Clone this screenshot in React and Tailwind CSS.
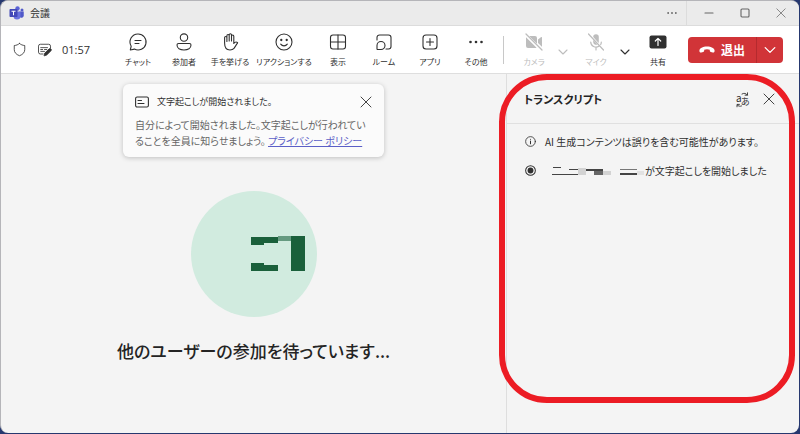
import clsx from 'clsx'

function Icon({ children, className = 'size-5', viewBox = '0 0 20 20' }) {
  return (
    <svg
      className={clsx('shrink-0 overflow-visible', className)}
      viewBox={viewBox}
      fill="none"
      stroke="currentColor"
      strokeWidth={1.1}
      strokeLinecap="round"
      strokeLinejoin="round"
      aria-hidden="true"
    >
      {children}
    </svg>
  )
}

function TeamsLogo() {
  return (
    <svg className="h-[14px] w-[15px]" viewBox="0 0 30 28" aria-hidden="true">
      <circle cx="26" cy="8" r="3" fill="#5059c9" />
      <circle cx="17" cy="5" r="4.4" fill="#5b63d6" />
      <path d="M21 11h8.5v8a4.5 4.5 0 0 1-8.5 2z" fill="#5059c9" />
      <path d="M9 11h14v9a7 7 0 0 1-14 0z" fill="#6a72de" />
      <rect x="1" y="6" width="16" height="16" rx="1.5" fill="#4349b8" />
      <path d="M5 10.5h8M9 10.5v8" stroke="#fff" strokeWidth="2" />
    </svg>
  )
}

const ChatIcon = () => (
  <Icon>
    <path d="M10 2a8 8 0 1 1-3.6 15.1L2.3 18l.9-3.8A8 8 0 0 1 10 2z" />
    <path d="M7 8.5h6M7 11.5h4" />
  </Icon>
)

const PeopleIcon = () => (
  <Icon>
    <circle cx="10" cy="5.6" r="3.7" />
    <path d="M4.6 11.5h10.8c.9 0 1.6.7 1.6 1.6 0 3-3 4.9-7 4.9s-7-1.9-7-4.9c0-.9.7-1.6 1.6-1.6z" />
  </Icon>
)

const HandIcon = () => (
  <Icon>
    <path d="M4.6 11V5.6a1.15 1.15 0 0 1 2.3 0v3.9M6.9 9.5V3.7a1.15 1.15 0 0 1 2.3 0V9M9.2 9V2.9a1.15 1.15 0 0 1 2.3 0V9M11.5 9V4.2a1.15 1.15 0 0 1 2.3 0v7.3c1-1.4 2.3-1.8 3.6-1.1.3.2.3.5.1.8-1.6 1.8-2.2 3.6-3.5 5.2-.9 1.1-2.2 1.6-4 1.6-3.6 0-5.4-2.4-5.4-7" />
  </Icon>
)

const SmileIcon = () => (
  <Icon>
    <circle cx="10" cy="10" r="8" />
    <path d="M6.7 12.2c1.7 2.2 4.9 2.2 6.6 0" />
    <circle cx="7.3" cy="8" r=".6" fill="currentColor" />
    <circle cx="12.7" cy="8" r=".6" fill="currentColor" />
  </Icon>
)

const GridIcon = () => (
  <Icon>
    <rect x="2.5" y="3" width="15" height="14" rx="2.5" />
    <path d="M10 3v14M2.5 10h15" />
  </Icon>
)

const RoomIcon = () => (
  <Icon>
    <path d="M3 8V5.5A2.5 2.5 0 0 1 5.5 3h9A2.5 2.5 0 0 1 17 5.5v9a2.5 2.5 0 0 1-2.5 2.5H12" />
    <path d="M3 17v-3.5a4 4 0 1 1 4 4H3.5A.5.5 0 0 1 3 17z" />
  </Icon>
)

const AppsIcon = () => (
  <Icon>
    <rect x="3" y="3" width="14" height="14" rx="3" />
    <path d="M10 6.5v7M6.5 10h7" />
  </Icon>
)

const MoreIcon = ({ className = 'size-5' }) => (
  <Icon className={className}>
    <g fill="currentColor" stroke="none">
      <circle cx="4.5" cy="10" r="1.3" />
      <circle cx="10" cy="10" r="1.3" />
      <circle cx="15.5" cy="10" r="1.3" />
    </g>
  </Icon>
)

const CameraOffIcon = () => (
  <Icon>
    <g fill="currentColor" stroke="none">
      <path d="M5.2 4H11a2 2 0 0 1 2 2v5.8zM2 5.2 12.6 15.8c-.5.2-1 .2-1.6.2H4a2 2 0 0 1-2-2z" />
      <path d="m14 7.500 3.200-2.400c.4-.2.8 0 .8.5v8.800c0 .2 0 .3-.1.4L14 11z" />
    </g>
    <path d="m2 2 16 16" strokeWidth={1.3} />
  </Icon>
)

const MicOffIcon = () => (
  <Icon>
    <path
      d="M7.2 5a2.8 2.8 0 0 1 5.6 0v5c0 .4-.1.8-.2 1.100zM7.200 8l4.200 4.400A2.800 2.800 0 0 1 7.200 10z"
      fill="currentColor"
      stroke="none"
    />
    <path
      d="M4.7 10a5.3 5.3 0 0 0 8.2 4.3M15.3 10c0 .9-.2 1.7-.6 2.5M10 15.3V18M2.5 2l15 16"
      strokeWidth={1.2}
    />
  </Icon>
)

const ShareIcon = () => (
  <Icon>
    <rect x="1.5" y="3.5" width="17" height="13" rx="2" fill="currentColor" stroke="none" />
    <path d="M10 13.5v-7M7.3 9 10 6.3 12.7 9" stroke="#fff" strokeWidth={1.2} />
  </Icon>
)

const ChevronIcon = ({ className = 'size-[10px]' }) => (
  <Icon className={className} viewBox="0 0 10 10">
    <path d="m1 3 4 4 4-4" />
  </Icon>
)

const CloseIcon = ({ className = 'size-3' }) => (
  <Icon className={className} viewBox="0 0 12 12">
    <path d="m1 1 10 10M11 1 1 11" strokeWidth={0.9} />
  </Icon>
)

const tools = [
  { label: 'チャット', icon: ChatIcon },
  { label: '参加者', icon: PeopleIcon },
  { label: '手を挙げる', icon: HandIcon },
  { label: 'リアクションする', icon: SmileIcon, wide: true },
  { label: '表示', icon: GridIcon },
  { label: 'ルーム', icon: RoomIcon },
  { label: 'アプリ', icon: AppsIcon },
  { label: 'その他', icon: MoreIcon },
]

function ToolButton({ label, icon: Glyph, className, disabled }) {
  return (
    <button
      type="button"
      disabled={disabled}
      className={clsx(
        'flex flex-col items-center gap-1 whitespace-nowrap text-[8px] leading-3',
        disabled ? 'text-[#bdbdbd]' : 'text-[#303030]',
        className
      )}
    >
      <Glyph />
      <span>{label}</span>
    </button>
  )
}

function TitleBar() {
  return (
    <header className="flex h-[25px] items-center justify-between border-b border-[#dcdcdc] bg-[#ebebeb] text-[#666]">
      <div className="flex items-center gap-[6px] pl-2">
        <TeamsLogo />
        <h1 className="text-[10px] leading-4 text-[#333]">会議</h1>
      </div>
      <div className="flex h-full items-center pr-1">
        <button type="button" aria-label="設定など" className="flex w-7 justify-center">
          <MoreIcon className="size-[14px]" />
        </button>
        <div className="h-full w-px bg-[#dcdcdc]" />
        <button type="button" aria-label="最小化" className="flex w-9 justify-center pl-2">
          <Icon className="size-[10px]" viewBox="0 0 10 10">
            <path d="M1 5h8" />
          </Icon>
        </button>
        <button type="button" aria-label="最大化" className="flex w-9 justify-center pl-2">
          <Icon className="size-[10px]" viewBox="0 0 10 10">
            <rect x="1" y="1" width="8" height="8" rx="1" />
          </Icon>
        </button>
        <button type="button" aria-label="閉じる" className="flex w-9 justify-center pl-2">
          <CloseIcon className="size-[10px]" />
        </button>
      </div>
    </header>
  )
}

function Toolbar() {
  return (
    <div className="flex h-12 items-center border-b border-[#dedede] bg-white pr-4">
      <div className="flex flex-1 items-center gap-[10px] pl-[11px] text-[#303030]">
        <Icon className="size-[15px]">
          <path d="M10 2c2 1.6 4.2 2.5 7 2.7V10c0 4-2.5 6.6-7 8.3C5.5 16.6 3 14 3 10V4.7C5.8 4.5 8 3.6 10 2z" />
        </Icon>
        <Icon className="size-[15px]">
          <path d="M8 16H4.5A2.5 2.5 0 0 1 2 13.5v-8A2.5 2.5 0 0 1 4.5 3h11A2.5 2.5 0 0 1 18 5.5V8M5 7.5h9M5 10h2.5M10 10h3M5 12.5h5" />
          <path d="m9.5 18 .9-3.3 5.7-5.4a1.7 1.7 0 0 1 2.5 2.5L13 17.2z" fill="currentColor" />
        </Icon>
        <time className="font-[Open_Sans] text-[11px] leading-4">01:57</time>
      </div>

      <div className="flex items-center">
        {tools.map((tool) => (
          <ToolButton
            key={tool.label}
            label={tool.label}
            icon={tool.icon}
            className={tool.wide ? 'w-[62px]' : 'w-[46px]'}
          />
        ))}
        <div className="mr-[6px] ml-1 h-7 w-px bg-[#c8c8c8]" />
        <ToolButton label="カメラ" icon={CameraOffIcon} className="ml-1 w-10" disabled />
        <button type="button" disabled aria-label="カメラのオプション" className="flex w-[18px] justify-center pt-1 text-[#bdbdbd]">
          <ChevronIcon />
        </button>
        <ToolButton label="マイク" icon={MicOffIcon} className="ml-1 w-10" disabled />
        <button type="button" aria-label="マイクのオプション" className="flex w-[18px] justify-center pt-1 text-[#303030]">
          <ChevronIcon />
        </button>
        <ToolButton label="共有" icon={ShareIcon} className="ml-1 w-10" />
      </div>

      <div className="ml-[10px] flex h-[26px] overflow-hidden rounded bg-[#d13438] text-white">
        <button type="button" className="flex w-[68px] items-center justify-center gap-[6px] text-xs font-bold leading-4">
          <svg className="h-[7px] w-4" viewBox="0 0 16 7" fill="currentColor" aria-hidden="true">
            <path d="M8 .4c4.2 0 7.6 1.6 7.6 4.3 0 1.5-.7 2-1.9 1.7l-1.8-.5c-.8-.2-1.100-.7-1.100-1.500v-.7C10 3.400 9 3.200 8 3.200s-2 .2-2.800.5v.7c0 .8-.3 1.300-1.100 1.500l-1.800.5C1.100 6.700.4 6.200.4 4.700.4 2 3.800.4 8 .4z" />
          </svg>
          退出
        </button>
        <button type="button" aria-label="退出のオプション" className="flex w-[27px] items-center justify-center border-l border-[#b52a2e]">
          <ChevronIcon className="size-3" />
        </button>
      </div>
    </div>
  )
}

function TranscriptionNotice() {
  return (
    <section className="w-[261px] rounded-md bg-[#fbfbfb] px-3 py-2 shadow-[0_1px_5px_rgba(0,0,0,0.22)]">
      <div className="flex items-center gap-2 text-[#303030]">
        <Icon className="size-[14px]" viewBox="0 0 14 14">
          <rect x="0.6" y="2" width="12.8" height="10" rx="1.5" />
          <path d="M3 5.5h3.5M3 8.500h6" />
        </Icon>
        <h2 className="flex-1 text-[9px] leading-5">文字起こしが開始されました。</h2>
        <button type="button" aria-label="通知を閉じる">
          <CloseIcon />
        </button>
      </div>
      <p className="mt-[5px] whitespace-nowrap text-[10px] leading-4 text-[#666]">
        自分によって開始されました。文字起こしが行われてい
        <br />
        ることを全員に知らせましょう。{' '}
        <a href="#privacy" className="text-[#5b5fc7] underline">
          プライバシー ポリシー
        </a>
      </p>
    </section>
  )
}

// Initials are masked with a coarse mosaic
function Avatar() {
  return (
    <svg className="mt-[34px] size-[126px]" viewBox="0 0 126 126" shapeRendering="crispEdges" aria-hidden="true">
      <circle cx="63" cy="63" r="63" fill="#d1ebdf" shapeRendering="auto" />
      <g fill="#1a603b">
        <rect x="60" y="46" width="13" height="8" />
        <rect x="73" y="46" width="14" height="6" />
        <rect x="87" y="45" width="13" height="5" fill="#659a80" />
        <rect x="100" y="45" width="14" height="35" />
        <rect x="60" y="72" width="13" height="8" />
        <rect x="73" y="74" width="14" height="6" />
      </g>
    </svg>
  )
}

function MaskedName() {
  return (
    <svg className="h-3 w-[93px] shrink-0" viewBox="0 0 93 12" shapeRendering="crispEdges" aria-hidden="true">
      <g fill="#444">
        <rect x="1" y="2" width="8" height="1" />
        <rect x="0" y="9" width="26" height="1" />
        <rect x="17" y="4" width="9" height="1" />
        <rect x="34" y="4" width="17" height="2" />
        <rect x="68" y="4" width="17" height="1" fill="#777" />
        <rect x="68" y="8" width="17" height="2" />
        <rect x="42" y="6" width="9" height="4" fill="#666" />
      </g>
      <g fill="#d3d3d3">
        <rect x="26" y="3" width="8" height="7" />
        <rect x="51" y="6" width="8" height="4" />
        <rect x="85" y="6" width="7" height="4" fill="#e2e2e2" />
      </g>
    </svg>
  )
}

function TranscriptPanel() {
  return (
    <aside className="relative w-[293px] shrink-0 border-l border-[#dedede] text-[#303030]">
      <div className="flex h-[50px] items-center gap-3 border-b border-[#e0e0e0] pr-6 pl-[17px]">
        <h2 className="flex-1 text-[11px] font-bold leading-5 text-[#242424]">トランスクリプト</h2>
        <button type="button" aria-label="翻訳">
          <Icon className="size-4" viewBox="0 0 16 16">
            <g fill="currentColor" stroke="none">
              <text x="1" y="11" fontSize="10">a</text>
              <text x="6" y="14" fontSize="9">あ</text>
            </g>
            <path d="M7 3c2-1.200 4-.8 5.300 1M12.500 1.800v2.400h-2.400M6.500 15c-1.600.6-3.200.2-4.200-1M2 15.800v-2.400h2.400" strokeWidth={0.9} />
          </Icon>
        </button>
        <button type="button" aria-label="トランスクリプトを閉じる">
          <CloseIcon />
        </button>
      </div>

      <ul className="flex flex-col gap-3 py-[9px] pl-[18px] text-[10px] leading-[17px] whitespace-nowrap">
        <li className="flex items-center gap-[9px]">
          <Icon className="size-[11px]" viewBox="0 0 12 12">
            <circle cx="6" cy="6" r="5.3" strokeWidth={0.9} />
            <path d="M6 5.5v3M6 3.5v.1" />
          </Icon>
          AI 生成コンテンツは誤りを含む可能性があります。
        </li>
        <li className="flex items-center">
          <Icon className="mr-4 size-[11px]" viewBox="0 0 12 12">
            <circle cx="6" cy="6" r="5.3" />
            <circle cx="6" cy="6" r="3.2" fill="currentColor" stroke="none" />
          </Icon>
          <MaskedName />
          が文字起こしを開始しました
        </li>
      </ul>

      <div className="pointer-events-none absolute top-0 right-1 bottom-[30px] -left-2 rounded-[48px] border-6 border-[#ec1c24]" />
    </aside>
  )
}

export default function App() {
  return (
    <div className="flex min-h-screen flex-col bg-[#26386f] pr-px pb-px font-['Noto_Sans_CJK_JP',sans-serif] [font-feature-settings:'palt']">
      <div className="flex flex-1 flex-col overflow-hidden rounded-lg border-t border-l border-[#b5b5b9] bg-[#f4f4f4]">
        <TitleBar />
        <Toolbar />
        <div className="flex flex-1">
          <main className="flex flex-1 flex-col items-center pt-[10px]">
            <TranscriptionNotice />
            <Avatar />
            <p className="mt-5 text-[17px] font-medium leading-7 text-[#242424]">他のユーザーの参加を待っています...</p>
          </main>
          <TranscriptPanel />
        </div>
      </div>
    </div>
  )
}
